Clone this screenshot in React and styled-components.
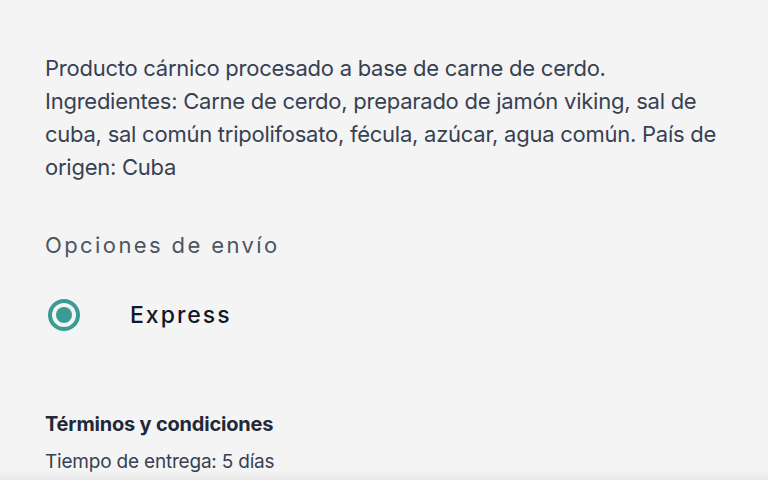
import React from 'react';
import styled, { createGlobalStyle } from 'styled-components';

const GlobalStyle = createGlobalStyle`
  html, body {
    margin: 0;
    padding: 0;
    background: #f4f4f5;
    font-family: Inter, "Noto Sans", "Liberation Sans", sans-serif;
    -webkit-font-smoothing: antialiased;
  }
`;

const Page = styled.main`
  min-height: 480px;
  padding: 52px 45px 0;
  box-sizing: border-box;
  position: relative;
  overflow: hidden;
`;

const Description = styled.p`
  margin: 0;
  font-size: 22px;
  line-height: 33px;
  color: #374151;
  letter-spacing: -0.25px;
`;

const SectionTitle = styled.h3`
  margin: 46px 0 0;
  font-size: 22px;
  font-weight: 400;
  letter-spacing: 2.4px;
  line-height: 30px;
  color: #4b5563;
`;

const OptionRow = styled.label`
  display: flex;
  align-items: center;
  gap: 50px;
  margin-top: 39px;
  padding-left: 3px;
`;

const Radio = styled.span`
  width: 32px;
  height: 32px;
  border-radius: 50%;
  box-sizing: border-box;
  border: 4px solid ${(p) => p.color};
  display: flex;
  align-items: center;
  justify-content: center;

  &::after {
    content: '';
    width: 16px;
    height: 16px;
    border-radius: 50%;
    background: ${(p) => (p.checked ? p.color : 'transparent')};
  }
`;

const OptionLabel = styled.span`
  font-size: 23px;
  letter-spacing: 2px;
  color: #111827;
  font-weight: 500;
`;

const Terms = styled.section`
  margin-top: 80px;
`;

const TermsTitle = styled.h4`
  margin: 0;
  font-size: 20px;
  font-weight: 700;
  line-height: 27px;
  color: #1f2937;
  letter-spacing: -0.2px;
`;

const TermsText = styled.p`
  margin: 11px 0 0;
  font-size: 19px;
  line-height: 25px;
  color: #374151;
  letter-spacing: -0.2px;
`;

const BottomShade = styled.div`
  position: absolute;
  left: 0;
  right: 0;
  bottom: 0;
  height: 10px;
  background: linear-gradient(to bottom, rgba(0, 0, 0, 0), rgba(0, 0, 0, 0.05));
`;

export default function App() {
  return (
    <>
      <GlobalStyle />
      <Page>
        <Description>
          Producto cárnico procesado a base de carne de cerdo. Ingredientes: Carne de cerdo,
          preparado de jamón viking, sal de cuba, sal común tripolifosato, fécula, azúcar, agua
          común. País de origen: Cuba
        </Description>
        <SectionTitle>Opciones de envío</SectionTitle>
        <OptionRow>
          <Radio checked color="#3a9a94" />
          <OptionLabel>Express</OptionLabel>
        </OptionRow>
        <Terms>
          <TermsTitle>Términos y condiciones</TermsTitle>
          <TermsText>Tiempo de entrega: 5 días</TermsText>
        </Terms>
        <BottomShade />
      </Page>
    </>
  );
}
